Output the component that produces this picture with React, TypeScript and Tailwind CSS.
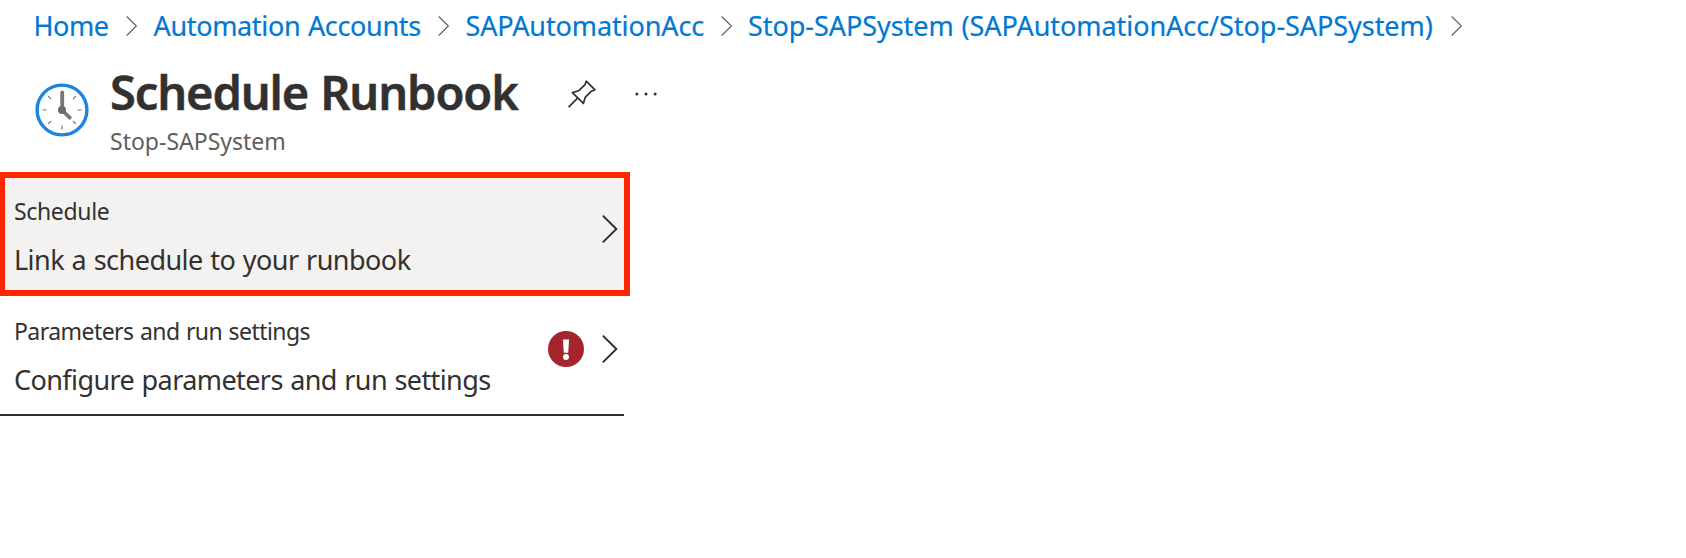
import React from 'react';

function CrumbChevron() {
  return (
    <svg className="h-5 w-3 shrink-0" viewBox="0 0 12 20" fill="none" stroke="#605e5c" strokeWidth="1.1">
      <path d="M0.7 0.5 10.4 10 0.7 19.5" />
    </svg>
  );
}

function RowChevron() {
  return (
    <svg className="h-7 w-4 shrink-0" viewBox="0 0 16 28" fill="none" stroke="#292827" strokeWidth="1.8">
      <path d="M0.8 0.6 14.4 14 0.8 27.4" />
    </svg>
  );
}

function ClockIcon() {
  return (
    <svg className="mt-[21px] size-[54px] shrink-0" viewBox="0 0 54 54" fill="none">
      <circle cx="27" cy="27" r="24.9" fill="#fff" stroke="#1b83e2" strokeWidth="3.4" />
      <g stroke="#767676" strokeWidth="1.2">
        <path d="M7.5 27h4M42.5 27h4M27 42.5v4M13.2 13.2l2.8 2.8M38 16l2.8-2.8M13.2 40.8 16 38M38 38l2.8 2.8" />
      </g>
      <path d="M27.2 9.5V27" stroke="#767676" strokeWidth="3.8" strokeLinecap="round" />
      <path d="M27 27l8.8 8.8" stroke="#767676" strokeWidth="3.6" />
      <circle cx="27" cy="27" r="4" fill="#6b6b6b" />
    </svg>
  );
}

function PinIcon() {
  return (
    <svg className="mt-[18px] size-7 shrink-0" viewBox="0 0 28 28" fill="none" stroke="#323130" strokeWidth="1.7" strokeLinejoin="round">
      <path d="M18.2 1.2 27 9.8 23.4 11.2 17.2 17.4 15.4 23.4 4.4 12.6 10.6 10.8 17 4.6Z" />
      <path d="M9.6 18.2.6 27.2" />
    </svg>
  );
}

function ErrorIcon() {
  return (
    <svg className="size-9 shrink-0" viewBox="0 0 36 36">
      <circle cx="18" cy="18" r="18" fill="#a4262c" />
      <path d="M15 8.6h6l-.8 13.2h-4.4z" fill="#fff" />
      <circle cx="18" cy="26" r="3" fill="#fff" />
    </svg>
  );
}

export default function App() {
  return (
    <div className="h-[558px] w-[1686px] overflow-hidden bg-white font-['Noto_Sans','Open_Sans',sans-serif] [word-spacing:1px] text-[#323130]">
      <nav className="flex h-[62px] items-start pt-[6px] pl-[33.5px] text-[27px] leading-[40px] whitespace-nowrap text-[#0078d4] [-webkit-text-stroke:0.2px]">
        <div className="flex items-center">
          <a className="w-[92px] tracking-[-0.43px]">Home</a>
          <CrumbChevron />
          <a className="ml-4 w-[284px] tracking-[-0.34px]">Automation Accounts</a>
          <CrumbChevron />
          <a className="ml-4 w-[255.5px] tracking-[-0.11px]">SAPAutomationAcc</a>
          <CrumbChevron />
          <a className="ml-[15px] w-[703px] tracking-[-0.055px]">Stop-SAPSystem (SAPAutomationAcc/Stop-SAPSystem)</a>
          <CrumbChevron />
        </div>
      </nav>

      <header className="flex h-[110px] items-start pl-[34.5px]">
        <ClockIcon />
        <div className="ml-[21.5px] w-[457.5px]">
          <h1 className="text-[47px] leading-[60px] font-semibold tracking-[-1.12px] whitespace-nowrap [-webkit-text-stroke:0.5px]">Schedule Runbook</h1>
          <p className="mt-[3px] text-[23px] leading-8 text-[#605e5c]">Stop-SAPSystem</p>
        </div>
        <PinIcon />
        <svg className="mt-[30px] ml-[38px] h-1 w-6" viewBox="0 0 24 4" fill="#323130">
          <circle cx="2.9" cy="2" r="1.5" />
          <circle cx="12" cy="2" r="1.5" />
          <circle cx="21.1" cy="2" r="1.5" />
        </svg>
      </header>

      <main>
        <section className="flex h-[124px] w-[630px] border-6 border-l-5 border-[#ff2600] bg-[#f3f2f1] pl-[9px]">
          <div className="w-[588px] pt-[17px]">
            <p className="text-[23px] leading-8 tracking-[-0.34px]">Schedule</p>
            <p className="mt-[15px] text-[27px] leading-9 tracking-[-0.53px]">Link a schedule to your runbook</p>
          </div>
          <div className="mt-[37px]">
            <RowChevron />
          </div>
        </section>
        <section className="flex h-[120px] w-[624px] border-b-2 border-[#323130] pl-[14px]">
          <div className="w-[534px] pt-[19px]">
            <p className="text-[23px] leading-8 tracking-[-0.555px]">Parameters and run settings</p>
            <p className="mt-[15px] text-[27px] leading-9 tracking-[-0.59px]">Configure parameters and run settings</p>
          </div>
          <div className="mt-[35px] flex h-9 items-center gap-[18px]">
            <ErrorIcon />
            <RowChevron />
          </div>
        </section>
      </main>
    </div>
  );
}
